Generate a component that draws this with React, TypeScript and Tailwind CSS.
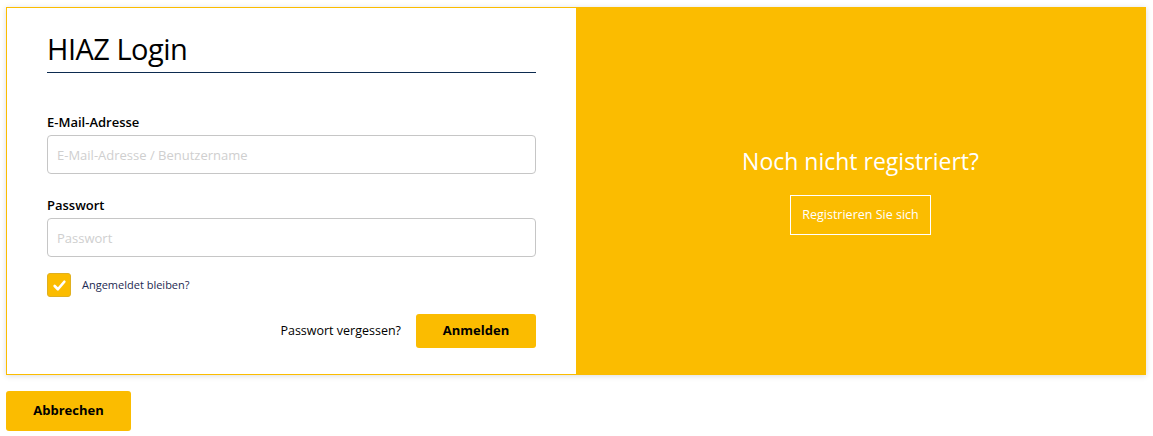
import React from 'react';

const font = { fontFamily: '"Open Sans", "Noto Sans", sans-serif' };

const CheckIcon = () => (
  <svg width="15" height="15" viewBox="0 0 14 14" fill="none">
    <path d="M2.5 7.5 L5.5 10.5 L11.5 3.5" stroke="white" strokeWidth="2.5" strokeLinecap="round" strokeLinejoin="round" />
  </svg>
);

export default function App() {
  return (
    <div className="min-h-screen bg-white pl-[6px] pr-[7px] pt-[7px] text-[#1a1a1a]" style={font}>
      {/* Card */}
      <div className="grid grid-cols-2 border border-[#fbbc00] shadow-[0_1px_6px_rgba(0,0,0,0.14)]">
        {/* Login form */}
        <div className="bg-white px-10 pt-[23px] pb-[26px]">
          <h1 className="border-b border-[#0c2b50] pb-[5px] text-[29px] leading-[36px] font-normal text-black tracking-[-0.5px]">
            HIAZ Login
          </h1>

          <label className="mt-[39px] block text-[13px] leading-5 font-semibold text-black">E-Mail-Adresse</label>
          <input
            type="text"
            placeholder="E-Mail-Adresse / Benutzername"
            className="mt-[3px] block h-[39px] w-full rounded-[4px] border border-[#c6c6c6] px-[9px] text-[13px] outline-none placeholder:text-[#cfcfcf]"
          />

          <label className="mt-[21px] block text-[13px] leading-5 font-semibold text-black">Passwort</label>
          <input
            type="password"
            placeholder="Passwort"
            className="mt-[3px] block h-[39px] w-full rounded-[4px] border border-[#c6c6c6] px-[9px] text-[13px] outline-none placeholder:text-[#cfcfcf]"
          />

          <div className="mt-4 flex items-center gap-[11px]">
            <span className="flex h-6 w-6 items-center justify-center rounded-[3px] border border-[#e0b020] bg-[#fbbc00]">
              <CheckIcon />
            </span>
            <span className="text-[11px] text-[#1c2a52]">Angemeldet bleiben?</span>
          </div>

          <div className="mt-[17px] flex items-center justify-end gap-[15px]">
            <span className="text-[12.5px] text-black">Passwort vergessen?</span>
            <button className="h-[34px] w-[120px] rounded-[3px] bg-[#fbbc00] text-[13px] font-bold text-black">
              Anmelden
            </button>
          </div>
        </div>

        {/* Register */}
        <div className="flex flex-col items-center justify-center bg-[#fbbc00] pb-[2px]">
          <h2 className="text-[23px] leading-8 font-normal text-white">Noch nicht registriert?</h2>
          <button className="mt-[18px] h-10 border border-white px-[11px] text-[12.5px] text-white">
            Registrieren Sie sich
          </button>
        </div>
      </div>

      <button className="mt-4 h-10 w-[125px] rounded-[3px] bg-[#fbbc00] text-[13px] font-bold text-black">
        Abbrechen
      </button>
    </div>
  );
}
